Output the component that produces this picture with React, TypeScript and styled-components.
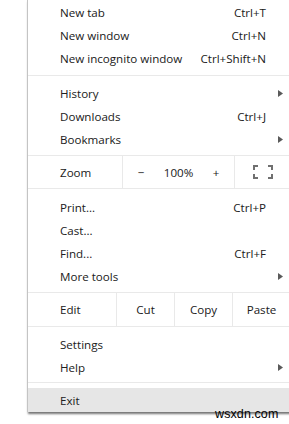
import styled, { createGlobalStyle } from 'styled-components'

const GlobalStyle = createGlobalStyle`
  html, body {
    margin: 0;
    padding: 0;
    background: #fff;
  }
  body {
    font-family: "Open Sans", "Noto Sans", "Liberation Sans", sans-serif;
    font-size: 11.6px;
    color: #202020;
  }
`

const Page = styled.div`
  position: relative;
  width: 289px;
  height: 424px;
  overflow: hidden;
  background: #fff;
`

const Menu = styled.div`
  margin-left: 27px;
  width: 268px;
  padding-top: 1px;
  background: #fff;
  border-left: 1px solid #c4c4c4;
  box-shadow: 1px 2px 2px rgba(0, 0, 0, 0.55);
`

const Item = styled.div<{ $active?: boolean }>`
  display: grid;
  grid-template-columns: 1fr auto 30px;
  align-items: center;
  height: ${p => (p.$active ? 24 : 23)}px;
  padding-left: 32px;
  background: ${p => (p.$active ? '#e6e6e6' : 'transparent')};
  white-space: nowrap;
`

const Shortcut = styled.span`
  text-align: right;
`

const ArrowSlot = styled.span`
  display: flex;
  align-items: center;
  padding-left: 12px;
`

const Separator = styled.div<{ $top: number; $bottom: number }>`
  height: 1px;
  background: #e9e9e9;
  margin: ${p => p.$top}px 0 ${p => p.$bottom}px;
`

const ButtonRow = styled.div<{ $cols: string; $height: number; $top: number; $bottom: number }>`
  display: grid;
  grid-template-columns: ${p => p.$cols};
  height: ${p => p.$height}px;
  margin: ${p => p.$top}px 0 ${p => p.$bottom}px;
  border-top: 1px solid #e9e9e9;
  border-bottom: 1px solid #e9e9e9;
`

const RowLabel = styled.div`
  display: flex;
  align-items: center;
  padding-left: 32px;
`

const Cell = styled.div`
  display: flex;
  align-items: center;
  justify-content: center;
  border-left: 1px solid #e9e9e9;
`

const ZoomControls = styled.div`
  display: grid;
  grid-template-columns: 36px 1fr 36px;
  align-items: center;
  justify-items: center;
  border-left: 1px solid #e9e9e9;
`

const Watermark = styled.div`
  position: absolute;
  left: 215px;
  top: 407px;
  font-family: "Liberation Sans", Arial, sans-serif;
  font-size: 12.5px;
  color: #000;
  letter-spacing: 0.1px;
`

const Arrow = () => (
  <svg width="5" height="7" viewBox="0 0 5 7">
    <polygon points="0,0 5,3.5 0,7" fill="#5a5a5a" />
  </svg>
)

const FullscreenIcon = () => (
  <svg width="20" height="14" viewBox="0 0 20 14">
    <g fill="none" stroke="#707070" strokeWidth="2">
      <path d="M1 5V1H5" />
      <path d="M15 1H19V5" />
      <path d="M1 9V13H5" />
      <path d="M15 13H19V9" />
    </g>
  </svg>
)

type Entry = { label: string; shortcut?: string; sub?: boolean; active?: boolean }

const MenuItem = ({ label, shortcut, sub, active }: Entry) => (
  <Item $active={active}>
    <span>{label}</span>
    <Shortcut>{shortcut}</Shortcut>
    <ArrowSlot>{sub && <Arrow />}</ArrowSlot>
  </Item>
)

const App = () => (
  <Page>
    <GlobalStyle />
    <Menu>
      <MenuItem label="New tab" shortcut="Ctrl+T" />
      <MenuItem label="New window" shortcut="Ctrl+N" />
      <MenuItem label="New incognito window" shortcut="Ctrl+Shift+N" />
      <Separator $top={5} $bottom={6} />
      <MenuItem label="History" sub />
      <MenuItem label="Downloads" shortcut="Ctrl+J" />
      <MenuItem label="Bookmarks" sub />
      <ButtonRow $cols="94px 112px 56px 1fr" $height={32} $top={4} $bottom={7}>
        <RowLabel>Zoom</RowLabel>
        <ZoomControls>
          <span>−</span>
          <span>100%</span>
          <span>+</span>
        </ZoomControls>
        <Cell>
          <FullscreenIcon />
        </Cell>
        <div />
      </ButtonRow>
      <MenuItem label="Print..." shortcut="Ctrl+P" />
      <MenuItem label="Cast..." />
      <MenuItem label="Find..." shortcut="Ctrl+F" />
      <MenuItem label="More tools" sub />
      <ButtonRow $cols="88px 58px 58px 58px 1fr" $height={33} $top={4} $bottom={6}>
        <RowLabel>Edit</RowLabel>
        <Cell>Cut</Cell>
        <Cell>Copy</Cell>
        <Cell>Paste</Cell>
        <div />
      </ButtonRow>
      <MenuItem label="Settings" />
      <MenuItem label="Help" sub />
      <Separator $top={3} $bottom={5} />
      <MenuItem label="Exit" active />
    </Menu>
    <Watermark>wsxdn.com</Watermark>
  </Page>
)

export default App
